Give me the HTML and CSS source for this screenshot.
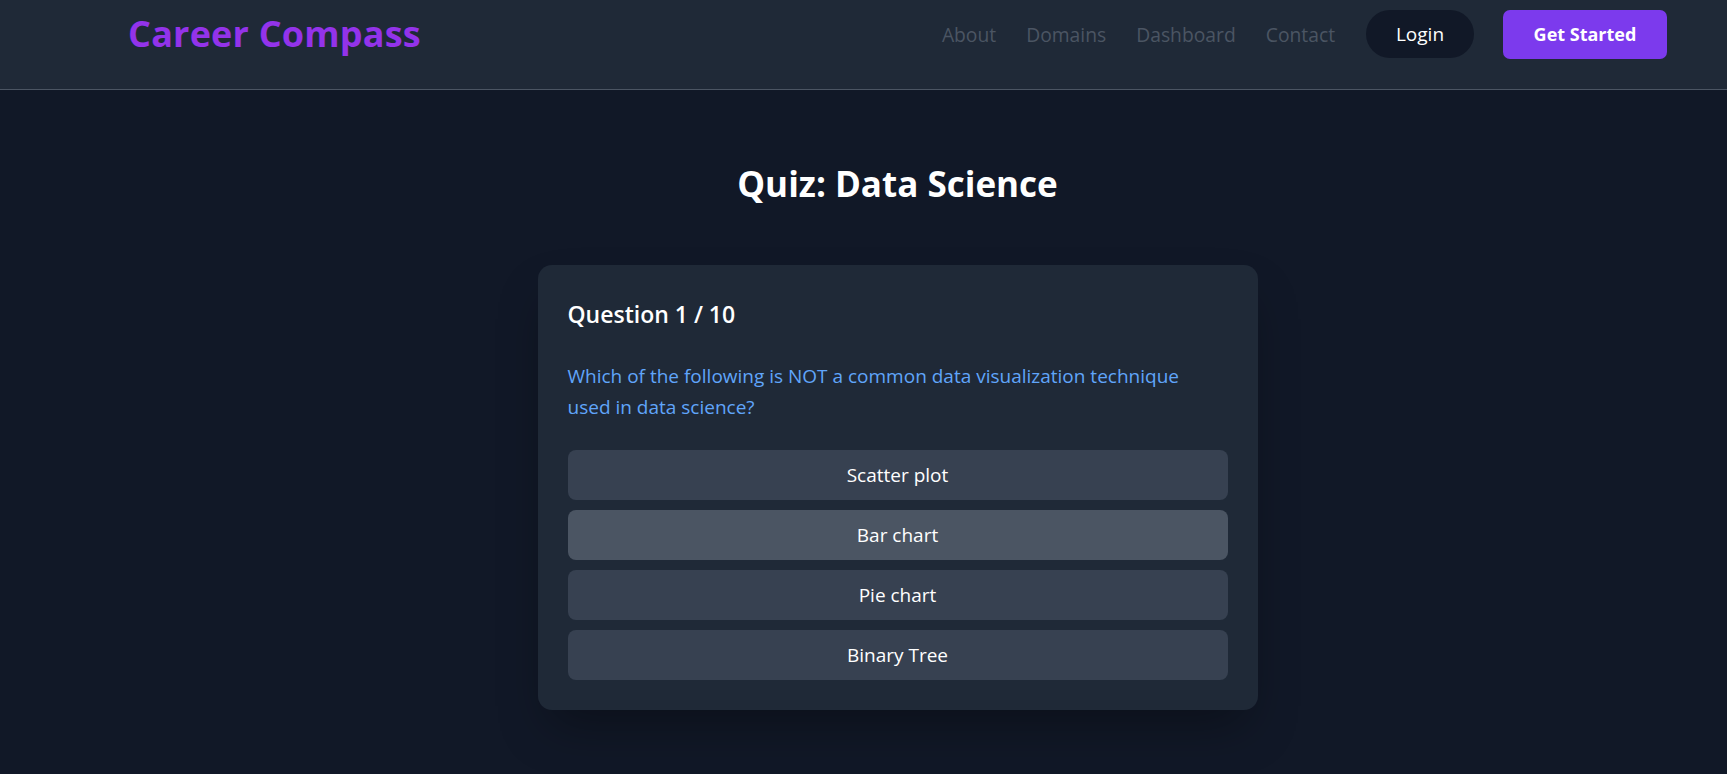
FILE: index.html
```html
<!DOCTYPE html>
<html lang="en">
<head>
<meta charset="utf-8">
<title>Career Compass - Quiz</title>
<link rel="stylesheet" href="styles.css">
</head>
<body>
<header class="topbar">
  <div class="logo">Career Compass</div>
  <nav class="nav">
    <a class="nav-link" href="#">About</a>
    <a class="nav-link" href="#">Domains</a>
    <a class="nav-link" href="#">Dashboard</a>
    <a class="nav-link" href="#">Contact</a>
    <button class="btn-login">Login</button>
    <button class="btn-start">Get Started</button>
  </nav>
</header>
<main class="main">
  <h1 class="title">Quiz: Data Science</h1>
  <section class="card">
    <h2 class="q-count">Question 1 / 10</h2>
    <p class="q-text">Which of the following is NOT a common data visualization technique used in data science?</p>
    <div class="options">
      <button class="option">Scatter plot</button>
      <button class="option option-hover">Bar chart</button>
      <button class="option">Pie chart</button>
      <button class="option">Binary Tree</button>
    </div>
  </section>
</main>
</body>
</html>
```
FILE: styles.css
```css
* { box-sizing: border-box; }
html, body { margin: 0; padding: 0; }
body {
  background: #111827;
  font-family: "Open Sans", "Noto Sans", sans-serif;
  color: #fff;
  min-height: 774px;
}
.topbar {
  background: #1f2937;
  border-bottom: 1px solid #4b5563;
  height: 90px;
  padding: 10px 60px 0 128px;
  display: flex;
  align-items: flex-start;
  justify-content: space-between;
}
.logo {
  color: #9333ea;
  font-weight: 700;
  font-size: 36px;
  line-height: 48px;
  letter-spacing: 0.2px;
}
.nav {
  display: flex;
  align-items: center;
  height: 48px;
}
.nav-link {
  color: #4b5563;
  text-decoration: none;
  font-size: 19.3px;
  margin-right: 30px;
}
.btn-login {
  font-family: inherit;
  background: #111827;
  color: #fff;
  border: none;
  border-radius: 999px;
  height: 48px;
  width: 108px;
  font-size: 19px;
  margin-left: 1px;
  margin-right: 29px;
}
.btn-start {
  font-family: inherit;
  background: #7c3aed;
  color: #fff;
  border: none;
  border-radius: 7px;
  height: 49px;
  width: 164px;
  font-size: 18px;
  font-weight: 700;
}
.main {
  display: flex;
  flex-direction: column;
  align-items: center;
  padding: 0 0 0 68px;
}
.title {
  margin: 69px 0 0;
  font-size: 35px;
  line-height: 50px;
  font-weight: 700;
}
.card {
  margin-top: 56px;
  width: 720px;
  background: #1f2937;
  border-radius: 14px;
  padding: 33px 30px 30px 30px;
  box-shadow: 0 25px 50px -12px rgba(0, 0, 0, 0.35);
}
.q-count {
  margin: 0;
  font-size: 23px;
  line-height: 32px;
  font-weight: 600;
}
.q-text {
  margin: 31px 0 0;
  color: #60a5fa;
  font-size: 19px;
  line-height: 31px;
  padding-right: 30px;
}
.options {
  margin-top: 27px;
  display: flex;
  flex-direction: column;
  gap: 10px;
}
.option {
  font-family: inherit;
  height: 50px;
  border: none;
  border-radius: 8px;
  background: #374151;
  color: #fff;
  font-size: 19px;
}
.option-hover { background: #4b5563; }
```
